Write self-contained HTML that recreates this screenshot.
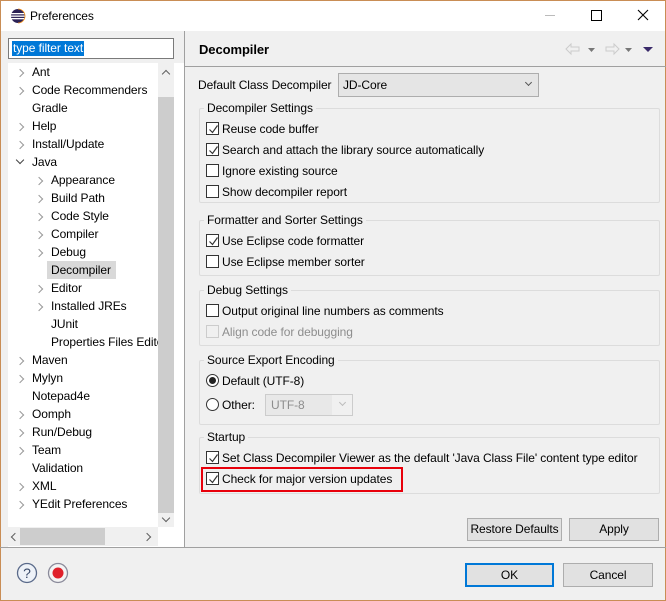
<!DOCTYPE html>
<html><head><style>
*{margin:0;padding:0;box-sizing:border-box}
body{width:666px;height:601px;overflow:hidden;font-family:"Liberation Sans",sans-serif;font-size:12px;letter-spacing:-0.08px;color:#000;background:#f0f0f0;position:relative}
.a{position:absolute;white-space:nowrap}
.win{position:absolute;left:0;top:0;width:666px;height:601px;border:1px solid #c98d55}
.cb{position:absolute;width:13px;height:13px;border:1px solid #333;background:#fff}
.cb svg{position:absolute;left:1px;top:1px}
.grp{position:absolute;border:1px solid #dcdcdc;border-radius:2px}
.gt{position:absolute;background:#f0f0f0;padding:0 3px}
.btn{position:absolute;height:23px;border:1px solid #adadad;background:#e1e1e1;text-align:center;line-height:21px}
.chev{position:absolute;width:6px;height:6px;border-right:1.3px solid #999;border-bottom:1.3px solid #999;transform:rotate(-45deg)}
.tr{position:absolute;line-height:18px}
</style></head><body>
<div class="win"></div>
<div class="a" style="left:1px;top:1px;width:664px;height:30px;background:#fff"></div>
<svg class="a" style="left:10px;top:8px" width="16" height="16"><circle cx="8" cy="8" r="7" fill="#2c2255"/><rect x="1" y="5" width="14" height="1.3" fill="#fff"/><rect x="1" y="7.5" width="14" height="1.3" fill="#fff"/><rect x="1" y="10" width="14" height="1.3" fill="#fff"/><path d="M8 1a7 7 0 0 1 0 14" fill="none" stroke="#f7941e" stroke-width="0.8"/></svg>
<div class="a" style="left:30px;top:9px;font-size:12px">Preferences</div>
<div class="a" style="left:545px;top:15px;width:10px;height:1px;background:#bbb"></div>
<div class="a" style="left:591px;top:10px;width:11px;height:11px;border:1px solid #000"></div>
<svg class="a" style="left:637px;top:9px" width="12" height="12"><path d="M1 1L11 11M11 1L1 11" stroke="#000" stroke-width="1.1"/></svg>

<div class="a" style="left:8px;top:38px;width:166px;height:21px;border:1px solid #7a7a7a;background:#fff"></div>
<div class="a" style="left:12px;top:41px;background:#0078d7;color:#fff;line-height:15px;padding:0 1px">type filter text</div>
<div class="a" style="left:8px;top:63px;width:176px;height:484px;background:#fff"></div>
<div class="a" style="left:158px;top:63px;width:16px;height:464px;background:#f0f0f0"></div>
<div class="a" style="left:158px;top:97px;width:16px;height:416px;background:#cdcdcd"></div>
<div class="chev" style="left:163px;top:71px;transform:rotate(-135deg);border-color:#606060"></div>
<div class="chev" style="left:163px;top:515px;transform:rotate(45deg);border-color:#606060"></div>
<div class="a" style="left:8px;top:527px;width:150px;height:19px;background:#f0f0f0"></div>
<div class="a" style="left:20px;top:528px;width:85px;height:17px;background:#cdcdcd"></div>
<div class="chev" style="left:12px;top:534px;transform:rotate(135deg);border-color:#606060"></div>
<div class="chev" style="left:144px;top:534px;border-color:#606060"></div>
<div class="a" style="left:184px;top:31px;width:1px;height:516px;background:#a0a0a0"></div>
<div class="a" style="left:0;top:547px;width:666px;height:1px;background:#a0a0a0"></div>

<div class="a" style="left:0;top:63px;width:158px;height:464px;overflow:hidden">
<div class="chev" style="left:17px;top:7px"></div><div class="tr" style="left:32px;top:0">Ant</div>
<div class="chev" style="left:17px;top:25px"></div><div class="tr" style="left:32px;top:18px">Code Recommenders</div>
<div class="tr" style="left:32px;top:36px">Gradle</div>
<div class="chev" style="left:17px;top:61px"></div><div class="tr" style="left:32px;top:54px">Help</div>
<div class="chev" style="left:17px;top:79px"></div><div class="tr" style="left:32px;top:72px">Install/Update</div>
<div class="chev" style="left:17px;top:94px;transform:rotate(45deg);border-color:#444"></div><div class="tr" style="left:32px;top:90px">Java</div>
<div class="chev" style="left:36px;top:115px"></div><div class="tr" style="left:51px;top:108px">Appearance</div>
<div class="chev" style="left:36px;top:133px"></div><div class="tr" style="left:51px;top:126px">Build Path</div>
<div class="chev" style="left:36px;top:151px"></div><div class="tr" style="left:51px;top:144px">Code Style</div>
<div class="chev" style="left:36px;top:169px"></div><div class="tr" style="left:51px;top:162px">Compiler</div>
<div class="chev" style="left:36px;top:187px"></div><div class="tr" style="left:51px;top:180px">Debug</div>
<div class="tr" style="left:47px;top:198px;background:#d9d9d9;padding:0 4px;width:69px">Decompiler</div>
<div class="chev" style="left:36px;top:223px"></div><div class="tr" style="left:51px;top:216px">Editor</div>
<div class="chev" style="left:36px;top:241px"></div><div class="tr" style="left:51px;top:234px">Installed JREs</div>
<div class="tr" style="left:51px;top:252px">JUnit</div>
<div class="tr" style="left:51px;top:270px">Properties Files Editor</div>
<div class="chev" style="left:17px;top:295px"></div><div class="tr" style="left:32px;top:288px">Maven</div>
<div class="chev" style="left:17px;top:313px"></div><div class="tr" style="left:32px;top:306px">Mylyn</div>
<div class="tr" style="left:32px;top:324px">Notepad4e</div>
<div class="chev" style="left:17px;top:349px"></div><div class="tr" style="left:32px;top:342px">Oomph</div>
<div class="chev" style="left:17px;top:367px"></div><div class="tr" style="left:32px;top:360px">Run/Debug</div>
<div class="chev" style="left:17px;top:385px"></div><div class="tr" style="left:32px;top:378px">Team</div>
<div class="tr" style="left:32px;top:396px">Validation</div>
<div class="chev" style="left:17px;top:421px"></div><div class="tr" style="left:32px;top:414px">XML</div>
<div class="chev" style="left:17px;top:439px"></div><div class="tr" style="left:32px;top:432px">YEdit Preferences</div>
</div>

<div class="a" style="left:199px;top:42px;font-size:13px;font-weight:bold">Decompiler</div>
<div class="a" style="left:185px;top:66px;width:481px;height:1px;background:#a0a0a0"></div>
<svg class="a" style="left:564px;top:42px" width="92" height="14"><path d="M2 7L7 2V5H15V9H7V12Z" fill="none" stroke="#ccc"/><path d="M24 6h7l-3.5 4z" fill="#777"/><path d="M55 7L50 2V5H42V9H50V12Z" fill="none" stroke="#ccc"/><path d="M61 6h7l-3.5 4z" fill="#777"/><path d="M79 5h10l-5 5z" fill="#3a2a6a"/></svg>
<div class="a" style="left:198px;top:78px">Default Class Decompiler</div>
<div class="a" style="left:338px;top:73px;width:201px;height:24px;border:1px solid #adadad;background:#e5e5e5"></div>
<div class="a" style="left:343px;top:78px">JD-Core</div>
<div class="chev" style="left:526px;top:80px;transform:rotate(45deg);border-color:#555;width:5px;height:5px"></div>

<div class="grp" style="left:199px;top:108px;width:461px;height:95px"></div><div class="gt" style="left:204px;top:101px">Decompiler Settings</div>
<div class="grp" style="left:199px;top:220px;width:461px;height:56px"></div><div class="gt" style="left:204px;top:213px">Formatter and Sorter Settings</div>
<div class="grp" style="left:199px;top:290px;width:461px;height:56px"></div><div class="gt" style="left:204px;top:283px">Debug Settings</div>
<div class="grp" style="left:199px;top:360px;width:461px;height:65px"></div><div class="gt" style="left:204px;top:353px">Source Export Encoding</div>
<div class="grp" style="left:199px;top:437px;width:461px;height:57px"></div><div class="gt" style="left:204px;top:430px">Startup</div>

<div class="cb" style="left:206px;top:122px"><svg width="11" height="11"><path d="M1.5 5.5L4.5 8.5L9.5 1.5" fill="none" stroke="#333" stroke-width="1.2"/></svg></div><div class="a" style="left:222px;top:122px">Reuse code buffer</div>
<div class="cb" style="left:206px;top:143px"><svg width="11" height="11"><path d="M1.5 5.5L4.5 8.5L9.5 1.5" fill="none" stroke="#333" stroke-width="1.2"/></svg></div><div class="a" style="left:222px;top:143px">Search and attach the library source automatically</div>
<div class="cb" style="left:206px;top:164px"></div><div class="a" style="left:222px;top:164px">Ignore existing source</div>
<div class="cb" style="left:206px;top:185px"></div><div class="a" style="left:222px;top:185px">Show decompiler report</div>
<div class="cb" style="left:206px;top:234px"><svg width="11" height="11"><path d="M1.5 5.5L4.5 8.5L9.5 1.5" fill="none" stroke="#333" stroke-width="1.2"/></svg></div><div class="a" style="left:222px;top:234px">Use Eclipse code formatter</div>
<div class="cb" style="left:206px;top:255px"></div><div class="a" style="left:222px;top:255px">Use Eclipse member sorter</div>
<div class="cb" style="left:206px;top:304px"></div><div class="a" style="left:222px;top:304px">Output original line numbers as comments</div>
<div class="cb" style="left:206px;top:325px;border-color:#ccc;background:#f0f0f0"></div><div class="a" style="left:222px;top:325px;color:#8d8d8d">Align code for debugging</div>
<div class="a" style="left:206px;top:374px;width:13px;height:13px;border:1px solid #333;border-radius:50%;background:#fff"></div><div class="a" style="left:209px;top:377px;width:7px;height:7px;border-radius:50%;background:#222"></div>
<div class="a" style="left:222px;top:374px">Default (UTF-8)</div>
<div class="a" style="left:206px;top:398px;width:13px;height:13px;border:1px solid #333;border-radius:50%;background:#fff"></div>
<div class="a" style="left:222px;top:398px">Other:</div>
<div class="a" style="left:265px;top:394px;width:88px;height:22px;border:1px solid #ccc;background:#f0f0f0"></div>
<div class="a" style="left:266px;top:395px;width:66px;height:20px;background:#e8e8e8"></div>
<div class="a" style="left:271px;top:398px;color:#8d8d8d">UTF-8</div>
<div class="chev" style="left:340px;top:400px;transform:rotate(45deg);border-color:#bbb;width:5px;height:5px"></div>
<div class="cb" style="left:206px;top:451px"><svg width="11" height="11"><path d="M1.5 5.5L4.5 8.5L9.5 1.5" fill="none" stroke="#333" stroke-width="1.2"/></svg></div><div class="a" style="left:222px;top:451px">Set Class Decompiler Viewer as the default 'Java Class File' content type editor</div>
<div class="cb" style="left:206px;top:472px"><svg width="11" height="11"><path d="M1.5 5.5L4.5 8.5L9.5 1.5" fill="none" stroke="#333" stroke-width="1.2"/></svg></div><div class="a" style="left:222px;top:472px">Check for major version updates</div>
<div class="a" style="left:201px;top:467px;width:202px;height:25px;border:2px solid #e8000b"></div>

<div class="btn" style="left:467px;top:518px;width:95px">Restore Defaults</div>
<div class="btn" style="left:569px;top:518px;width:90px">Apply</div>

<svg class="a" style="left:16px;top:562px" width="22" height="22"><circle cx="11" cy="11" r="9.5" fill="#eef2f8" stroke="#5a6a8a" stroke-width="1.3"/><text x="11" y="16" font-size="14" text-anchor="middle" fill="#3a4a6a" font-family="Liberation Sans">?</text></svg>
<svg class="a" style="left:47px;top:562px" width="22" height="22"><circle cx="11" cy="11" r="9.5" fill="#f4f4f4" stroke="#8a8a9a" stroke-width="1.3"/><circle cx="11" cy="11" r="5.5" fill="#e0202a"/></svg>
<div class="btn" style="left:465px;top:563px;width:89px;height:24px;border:2px solid #0078d7;line-height:20px">OK</div>
<div class="btn" style="left:563px;top:563px;width:90px;height:24px;line-height:22px">Cancel</div>
</body></html>
